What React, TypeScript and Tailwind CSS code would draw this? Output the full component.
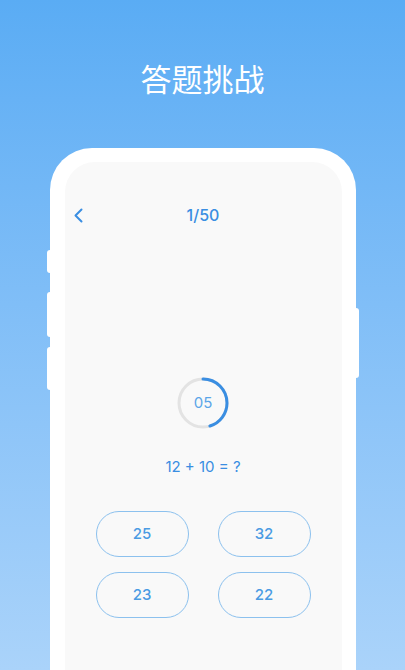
const options = ['25', '32', '23', '22'];

function Timer({ value, progress }: { value: string; progress: number }) {
  const r = 24;
  const c = 2 * Math.PI * r;
  return (
    <div className="relative w-[52px] h-[52px]">
      <svg width="52" height="52" viewBox="0 0 52 52" className="-rotate-90">
        <circle cx="26" cy="26" r={r} fill="none" stroke="#e3e3e3" strokeWidth="3" />
        <circle
          cx="26"
          cy="26"
          r={r}
          fill="none"
          stroke="#3a8ee2"
          strokeWidth="3"
          strokeLinecap="round"
          strokeDasharray={`${c * progress} ${c}`}
        />
      </svg>
      <span className="absolute inset-0 flex items-center justify-center text-[15px] text-[#5ba5e8]">
        {value}
      </span>
    </div>
  );
}

export default function App() {
  return (
    <div
      className="w-[405px] h-[670px] overflow-hidden flex flex-col items-center bg-gradient-to-b from-[#5aacf4] to-[#aad3fa]"
      style={{ fontFamily: 'Inter, "Noto Sans CJK SC", sans-serif' }}
    >
      <h1
        className="mt-[60px] h-[36px] leading-[36px] text-[31px] text-white font-normal"
        style={{ fontFamily: '"Noto Sans CJK SC", sans-serif' }}
      >
        答题挑战
      </h1>

      <div className="relative mt-[52px] w-[306px] h-[560px] shrink-0 rounded-t-[42px] bg-white pt-[14px] pl-[15px] pr-[14px]">
        {/* side buttons */}
        <span className="absolute -left-[3px] top-[102px] w-[3px] h-[23px] rounded-l-sm bg-white" />
        <span className="absolute -left-[3px] top-[144px] w-[3px] h-[45px] rounded-l-sm bg-white" />
        <span className="absolute -left-[3px] top-[199px] w-[3px] h-[43px] rounded-l-sm bg-white" />
        <span className="absolute -right-[3px] top-[160px] w-[3px] h-[70px] rounded-r-sm bg-white" />

        <div className="h-full rounded-t-[30px] bg-[#f9f9f9] flex flex-col items-center">
          <div className="relative mt-[41px] h-[24px] w-full flex items-center justify-center">
            <svg
              className="absolute left-[8px] top-[5px]"
              width="11"
              height="15"
              viewBox="0 0 11 15"
              fill="none"
              stroke="#3a8ee2"
              strokeWidth="2"
              strokeLinecap="round"
              strokeLinejoin="round"
            >
              <path d="M8.5 1.5 L2.5 7.5 L8.5 13.5" />
            </svg>
            <span className="text-[16px] font-medium text-[#3a8ee2]">1/50</span>
          </div>

          <div className="mt-[150px]">
            <Timer value="05" progress={0.45} />
          </div>

          <p className="mt-[28px] h-[20px] leading-[20px] text-[15px] text-[#3a8ee2]">12 + 10 = ?</p>

          <div className="mt-[34px] grid grid-cols-2 gap-x-[29px] gap-y-[15px]">
            {options.map(o => (
              <button
                key={o}
                className="w-[93px] h-[46px] rounded-full border-[1.5px] border-[#8cc1ee] text-[15px] font-medium text-[#4a9be3]"
              >
                {o}
              </button>
            ))}
          </div>
        </div>
      </div>
    </div>
  );
}
